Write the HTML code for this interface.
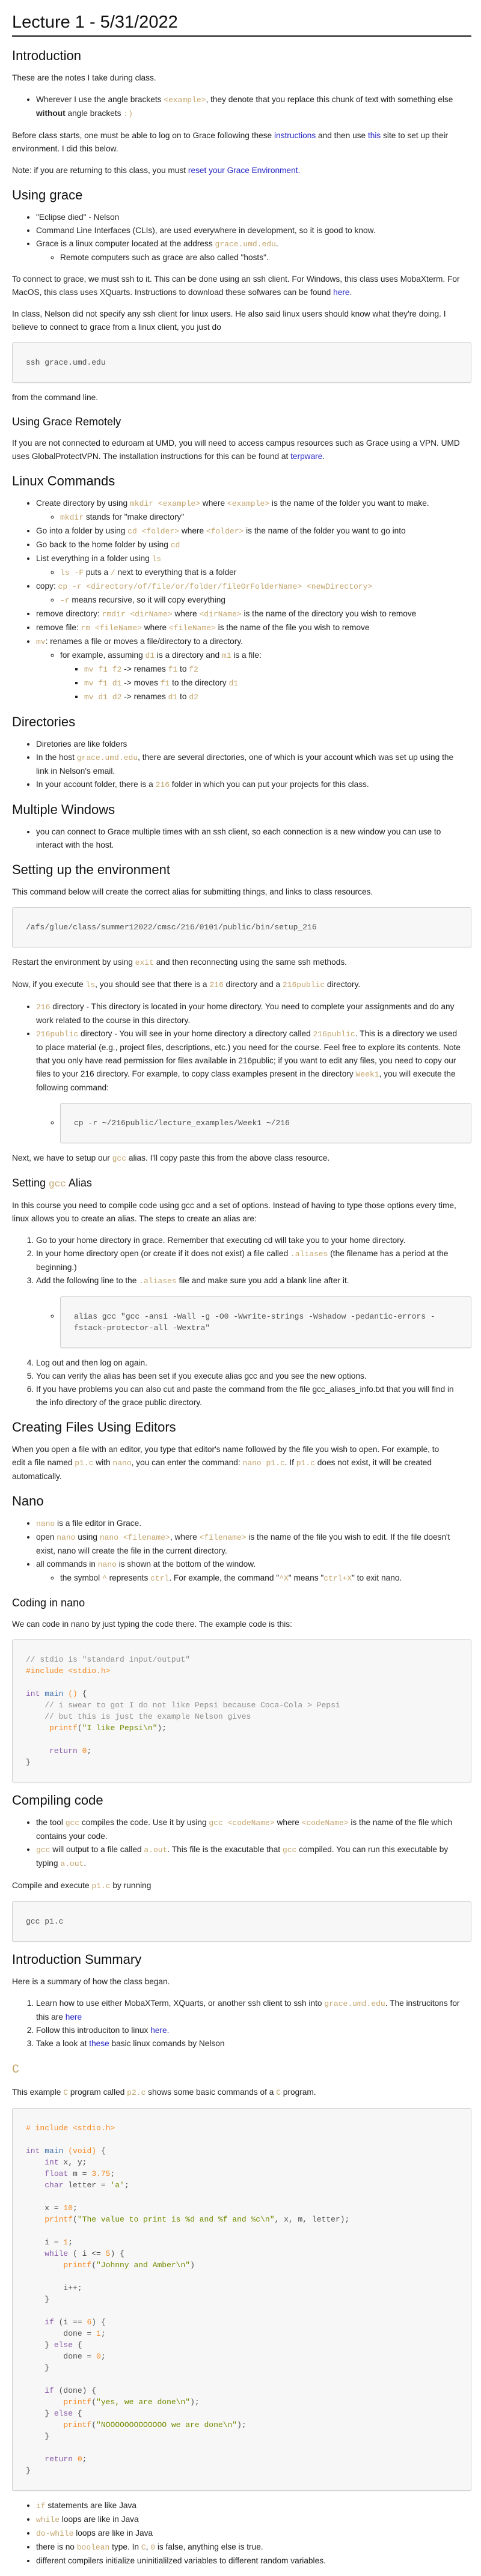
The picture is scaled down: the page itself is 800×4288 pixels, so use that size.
<!DOCTYPE html>
<html><head><meta charset="utf-8">
<style>
html,body{margin:0;padding:0;background:#fff;}
body{font-family:"Liberation Sans",Arial,sans-serif;font-size:13.7px;line-height:22px;color:#222;}
.w{width:764px;padding:0 16px 0 20px;}
h1{font-weight:normal;font-size:29px;line-height:34px;margin:20px 0 18px;padding-bottom:5px;border-bottom:2px solid #111;color:#111;}
h2{font-weight:normal;font-size:22px;line-height:28px;margin:16px 0 12px;color:#111;}
h3{font-weight:normal;font-size:18px;line-height:24px;margin:17px 0 13px;color:#111;}
p,ul,ol{margin:0 0 14px;}
ul,ol{padding-left:40px;}
ul ul,ol ul,ul ol{margin:0;}
ul ul{list-style:circle;}
ul ul ul{list-style:square;}
code{font-family:"Liberation Mono",monospace;font-size:13px;color:#c4a46c;}
a{color:#2424c4;text-decoration:none;}
pre{font-family:"Liberation Mono",monospace;font-size:13px;line-height:19px;color:#4d4d4c;background:#f7f7f7;border:1px solid #cfcfcf;border-radius:3px;padding:23px 22px;margin:0 0 14px;white-space:pre;box-shadow:0 1px 1px rgba(0,0,0,.08);}
li pre{margin:14px 0 0;}
ol li pre{margin:14px 0 14px;}
.c{color:#8e908c}.o{color:#f5871f}.k{color:#8959a8}.f{color:#4271ae}.s{color:#718c00}
</style></head><body><div class="w">
<h1>Lecture 1 - 5/31/2022</h1>
<h2>Introduction</h2>
<p>These are the notes I take during class.</p>
<ul><li>Wherever I use the angle brackets <code>&lt;example&gt;</code>, they denote that you replace this chunk of text with something else<br><b>without</b> angle brackets <code>:)</code></li></ul>
<p>Before class starts, one must be able to log on to Grace following these <a>instructions</a> and then use <a>this</a> site to set up their<br>environment. I did this below.</p>
<p>Note: if you are returning to this class, you must <a>reset your Grace Environment.</a></p>
<h2>Using grace</h2>
<ul><li>"Eclipse died" - Nelson</li><li>Command Line Interfaces (CLIs), are used everywhere in development, so it is good to know.</li><li>Grace is a linux computer located at the address <code>grace.umd.edu</code>.<ul><li>Remote computers such as grace are also called "hosts".</li></ul></li></ul>
<p>To connect to grace, we must ssh to it. This can be done using an ssh client. For Windows, this class uses MobaXterm. For<br>MacOS, this class uses XQuarts. Instructions to download these sofwares can be found <a>here</a>.</p>
<p>In class, Nelson did not specify any ssh client for linux users. He also said linux users should know what they're doing. I<br>believe to connect to grace from a linux client, you just do</p>
<pre>ssh grace.umd.edu</pre>
<p>from the command line.</p>
<h3>Using Grace Remotely</h3>
<p>If you are not connected to eduroam at UMD, you will need to access campus resources such as Grace using a VPN. UMD<br>uses GlobalProtectVPN. The installation instructions for this can be found at <a>terpware</a>.</p>
<h2>Linux Commands</h2>
<ul>
<li>Create directory by using <code>mkdir &lt;example&gt;</code> where <code>&lt;example&gt;</code> is the name of the folder you want to make.<ul><li><code>mkdir</code> stands for "make directory"</li></ul></li>
<li>Go into a folder by using <code>cd &lt;folder&gt;</code> where <code>&lt;folder&gt;</code> is the name of the folder you want to go into</li>
<li>Go back to the home folder by using <code>cd</code></li>
<li>List everything in a folder using <code>ls</code><ul><li><code>ls -F</code> puts a <code>/</code> next to everything that is a folder</li></ul></li>
<li>copy: <code>cp -r &lt;directory/of/file/or/folder/fileOrFolderName&gt; &lt;newDirectory&gt;</code><ul><li><code>-r</code> means recursive, so it will copy everything</li></ul></li>
<li>remove directory: <code>rmdir &lt;dirName&gt;</code> where <code>&lt;dirName&gt;</code> is the name of the directory you wish to remove</li>
<li>remove file: <code>rm &lt;fileName&gt;</code> where <code>&lt;fileName&gt;</code> is the name of the file you wish to remove</li>
<li><code>mv</code>: renames a file or moves a file/directory to a directory.<ul><li>for example, assuming <code>d1</code> is a directory and <code>m1</code> is a file:<ul><li><code>mv f1 f2</code> -&gt; renames <code>f1</code> to <code>f2</code></li><li><code>mv f1 d1</code> -&gt; moves <code>f1</code> to the directory <code>d1</code></li><li><code>mv d1 d2</code> -&gt; renames <code>d1</code> to <code>d2</code></li></ul></li></ul></li>
</ul>
<h2>Directories</h2>
<ul><li>Diretories are like folders</li><li>In the host <code>grace.umd.edu</code>, there are several directories, one of which is your account which was set up using the<br>link in Nelson's email.</li><li>In your account folder, there is a <code>216</code> folder in which you can put your projects for this class.</li></ul>
<h2>Multiple Windows</h2>
<ul><li>you can connect to Grace multiple times with an ssh client, so each connection is a new window you can use to<br>interact with the host.</li></ul>
<h2>Setting up the environment</h2>
<p>This command below will create the correct alias for submitting things, and links to class resources.</p>
<pre>/afs/glue/class/summer12022/cmsc/216/0101/public/bin/setup_216</pre>
<p>Restart the environment by using <code>exit</code> and then reconnecting using the same ssh methods.</p>
<p>Now, if you execute <code>ls</code>, you should see that there is a <code>216</code> directory and a <code>216public</code> directory.</p>
<ul><li><code>216</code> directory - This directory is located in your home directory. You need to complete your assignments and do any<br>work related to the course in this directory.</li>
<li><code>216public</code> directory - You will see in your home directory a directory called <code>216public</code>. This is a directory we used<br>to place material (e.g., project files, descriptions, etc.) you need for the course. Feel free to explore its contents. Note<br>that you only have read permission for files available in 216public; if you want to edit any files, you need to copy our<br>files to your 216 directory. For example, to copy class examples present in the directory <code>Week1</code>, you will execute the<br>following command:<ul><li><pre>cp -r ~/216public/lecture_examples/Week1 ~/216</pre></li></ul></li></ul>
<p>Next, we have to setup our <code>gcc</code> alias. I'll copy paste this from the above class resource.</p>
<h3>Setting <code style="font-size:16px">gcc</code> Alias</h3>
<p>In this course you need to compile code using gcc and a set of options. Instead of having to type those options every time,<br>linux allows you to create an alias. The steps to create an alias are:</p>
<ol><li>Go to your home directory in grace. Remember that executing cd will take you to your home directory.</li>
<li>In your home directory open (or create if it does not exist) a file called <code>.aliases</code> (the filename has a period at the<br>beginning.)</li>
<li>Add the following line to the <code>.aliases</code> file and make sure you add a blank line after it.<ul><li><pre>alias gcc "gcc -ansi -Wall -g -O0 -Wwrite-strings -Wshadow -pedantic-errors -
fstack-protector-all -Wextra"</pre></li></ul></li>
<li>Log out and then log on again.</li>
<li>You can verify the alias has been set if you execute alias gcc and you see the new options.</li>
<li>If you have problems you can also cut and paste the command from the file gcc_aliases_info.txt that you will find in<br>the info directory of the grace public directory.</li></ol>
<h2>Creating Files Using Editors</h2>
<p>When you open a file with an editor, you type that editor's name followed by the file you wish to open. For example, to<br>edit a file named <code>p1.c</code> with <code>nano</code>, you can enter the command: <code>nano p1.c</code>. If <code>p1.c</code> does not exist, it will be created<br>automatically.</p>
<h2>Nano</h2>
<ul><li><code>nano</code> is a file editor in Grace.</li><li>open <code>nano</code> using <code>nano &lt;filename&gt;</code>, where <code>&lt;filename&gt;</code> is the name of the file you wish to edit. If the file doesn't<br>exist, nano will create the file in the current directory.</li><li>all commands in <code>nano</code> is shown at the bottom of the window.<ul><li>the symbol <code>^</code> represents <code>ctrl</code>. For example, the command "<code>^X</code>" means "<code>ctrl+X</code>" to exit nano.</li></ul></li></ul>
<h3>Coding in nano</h3>
<p>We can code in nano by just typing the code there. The example code is this:</p>
<pre><span class="c">// stdio is "standard input/output"</span>
<span class="o">#include &lt;stdio.h&gt;</span>

<span class="k">int</span> <span class="f">main</span> <span class="o">()</span> {
    <span class="c">// i swear to got I do not like Pepsi because Coca-Cola &gt; Pepsi</span>
    <span class="c">// but this is just the example Nelson gives</span>
     <span class="o">printf</span>(<span class="s">"I like Pepsi\n"</span>);

     <span class="k">return</span> <span class="o">0</span>;
}</pre>
<h2>Compiling code</h2>
<ul><li>the tool <code>gcc</code> compiles the code. Use it by using <code>gcc &lt;codeName&gt;</code> where <code>&lt;codeName&gt;</code> is the name of the file which<br>contains your code.</li><li><code>gcc</code> will output to a file called <code>a.out</code>. This file is the exacutable that <code>gcc</code> compiled. You can run this executable by<br>typing <code>a.out</code>.</li></ul>
<p>Compile and execute <code>p1.c</code> by running</p>
<pre>gcc p1.c</pre>
<h2>Introduction Summary</h2>
<p>Here is a summary of how the class began.</p>
<ol><li>Learn how to use either MobaXTerm, XQuarts, or another ssh client to ssh into <code>grace.umd.edu</code>. The instrucitons for<br>this are <a>here</a></li><li>Follow this introduciton to linux <a>here.</a></li><li>Take a look at <a>these</a> basic linux comands by Nelson</li></ol>
<h2><code style="font-size:20px">C</code></h2>
<p>This example <code>C</code> program called <code>p2.c</code> shows some basic commands of a <code>C</code> program.</p>
<pre><span class="o"># include &lt;stdio.h&gt;</span>

<span class="k">int</span> <span class="f">main</span> <span class="o">(void)</span> {
    <span class="k">int</span> x, y;
    <span class="k">float</span> m = <span class="o">3.75</span>;
    <span class="k">char</span> letter = <span class="s">'a'</span>;

    x = <span class="o">10</span>;
    <span class="o">printf</span>(<span class="s">"The value to print is %d and %f and %c\n"</span>, x, m, letter);

    i = <span class="o">1</span>;
    <span class="k">while</span> ( i &lt;= <span class="o">5</span>) {
        <span class="o">printf</span>(<span class="s">"Johnny and Amber\n"</span>)

        i++;
    }

    <span class="k">if</span> (i == <span class="o">6</span>) {
        done = <span class="o">1</span>;
    } <span class="k">else</span> {
        done = <span class="o">0</span>;
    }

    <span class="k">if</span> (done) {
        <span class="o">printf</span>(<span class="s">"yes, we are done\n"</span>);
    } <span class="k">else</span> {
        <span class="o">printf</span>(<span class="s">"NOOOOOOOOOOOOO we are done\n"</span>);
    }

    <span class="k">return</span> <span class="o">0</span>;
}
</pre>
<ul><li><code>if</code> statements are like Java</li><li><code>while</code> loops are like in Java</li><li><code>do-while</code> loops are like in Java</li><li>there is no <code>boolean</code> type. In <code>C</code>, <code>0</code> is false, anything else is true.</li><li>different compilers initialize uninitialilzed variables to different random variables.</li></ul>
</div></body></html>
